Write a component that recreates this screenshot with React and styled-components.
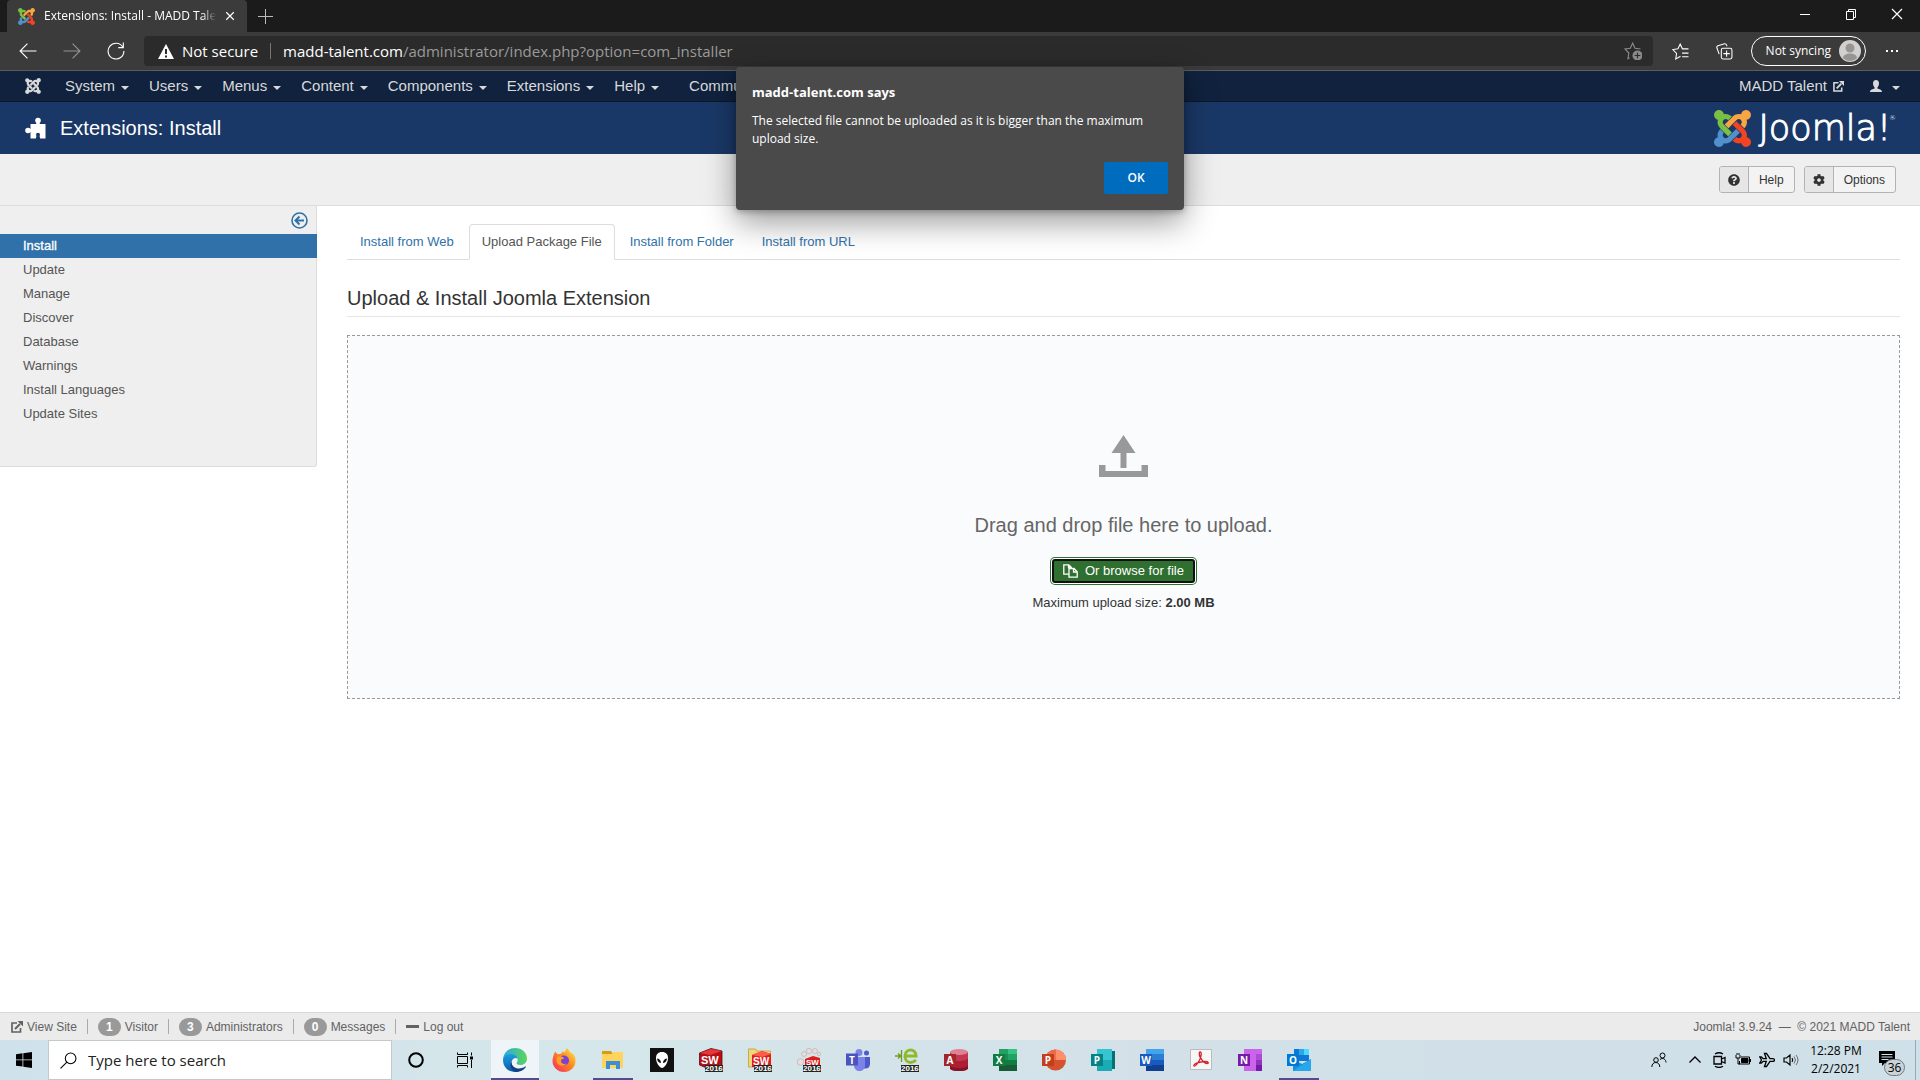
import React, { useState } from "react";
import styled, { createGlobalStyle, css } from "styled-components";
import {
  FaJoomla,
  FaQuestionCircle,
  FaCog,
} from "react-icons/fa";

const ui = `"Open Sans", "Noto Sans", sans-serif`;
const arial = `"Liberation Sans", Arial, sans-serif`;

const colors = {
  link: "#3071a9",
  navbar: "#10223e",
  header: "#1a3867",
  light: "#efefef",
  border: "#dddddd",
  taskAccent: "#564a8f",
};

const GlobalStyle = createGlobalStyle`
  *, *::before, *::after {
    box-sizing: border-box;
  }
  body {
    margin: 0;
    background: #fff;
    color: #333;
    font: 13px/18px ${arial};
  }
  button, input {
    font: inherit;
    color: inherit;
    margin: 0;
    padding: 0;
    border: 0;
    background: none;
  }
  a {
    color: inherit;
    text-decoration: none;
  }
  svg {
    display: block;
    flex: none;
  }
`;

const Screen = styled.div`
  position: relative;
  display: flex;
  flex-direction: column;
  min-height: 100vh;
`;

/* ---------- browser chrome ---------- */

const TitleBar = styled.header`
  display: flex;
  height: 32px;
  padding-left: 7px;
  background: #1b1b1b;
  color: #fff;
`;

const BrowserTab = styled.div`
  display: flex;
  align-items: center;
  gap: 9px;
  width: 240px;
  padding: 0 12px 0 11px;
  border-radius: 4px 4px 0 0;
  background: #3b3b3b;
  font: 12px/16px ${ui};
`;

const TabTitle = styled.span`
  flex: 1;
  overflow: hidden;
  white-space: nowrap;
  mask-image: linear-gradient(to right, #000 92%, transparent);
`;

const PlainButton = styled.button`
  display: flex;
  align-items: center;
  justify-content: center;
  width: ${(p) => p.$width || 44}px;
  opacity: ${(p) => (p.$dim ? 0.45 : 1)};
`;

const WindowControls = styled.div`
  display: flex;
  height: 28px;
  margin-left: auto;
`;

const Toolbar = styled.div`
  display: flex;
  align-items: stretch;
  height: 39px;
  padding: 4px 6px;
  border-bottom: 1px solid #5c5c5c;
  background: #3b3b3b;
  color: #fff;
`;

const AddressBar = styled.div`
  display: flex;
  flex: 1;
  align-items: center;
  margin: 0 6px;
  padding: 0 11px 0 14px;
  border-radius: 4px;
  background: #2b2b2b;
  font: 15px/20px ${ui};
`;

const Security = styled.span`
  display: flex;
  align-items: center;
  gap: 8px;
  height: 16px;
  margin-right: 12px;
  padding-right: 12px;
  border-right: 1px solid #777;
`;

const UrlInput = styled.input`
  flex: 1;
  color: #9a9a9a;
  outline: 0;
`;

const ProfilePill = styled.button`
  display: flex;
  align-items: center;
  gap: 8px;
  margin: 0 4px;
  padding: 0 4px 0 14px;
  border: 1px solid #fff;
  border-radius: 15px;
  font: 12px/16px ${ui};
`;

const Dialog = styled.div`
  position: absolute;
  top: 67px;
  left: 50%;
  width: 448px;
  margin-left: -224px;
  padding: 16px;
  border-radius: 4px;
  background: #4a4a4a;
  color: #fff;
  font: 12px/18px ${ui};
  box-shadow: 0 12px 32px rgba(0, 0, 0, 0.4), 0 2px 6px rgba(0, 0, 0, 0.25);
`;

const DialogTitle = styled.h2`
  margin: 0 0 11px;
  font-size: 13px;
  line-height: 18px;
`;

const DialogText = styled.p`
  margin: 0 0 14px;
`;

const OkButton = styled.button`
  display: block;
  width: 64px;
  height: 32px;
  margin-left: auto;
  border-radius: 2px;
  background: #006cbe;
  font-weight: 600;
`;

/* ---------- Joomla administrator ---------- */

const Navbar = styled.nav`
  display: flex;
  align-items: center;
  height: 31px;
  padding: 0 10px 0 24px;
  border-bottom: 1px solid #0b172b;
  background: ${colors.navbar};
  color: #d9d9d9;
  font-size: 15px;
`;

const MenuLink = styled.a`
  display: flex;
  align-items: center;
  gap: ${(p) => p.$gap || 6}px;
  padding: 0 10px;
`;

const MenuGroup = styled.div`
  display: flex;
  margin-left: ${(p) => (p.$end ? "auto" : p.$gap + "px")};
`;

const Caret = styled.span`
  margin-top: 3px;
  border: 4px solid transparent;
  border-top-color: currentColor;
  border-bottom: 0;
`;

const PageHeader = styled.div`
  display: flex;
  align-items: center;
  justify-content: space-between;
  height: 52px;
  padding: 0 24px;
  background: ${colors.header};
  color: #fff;
`;

const PageTitle = styled.h1`
  display: flex;
  align-items: center;
  gap: 14px;
  margin: 0;
  font-size: 20px;
  font-weight: normal;
  line-height: 26px;
`;

const Brand = styled.a`
  display: flex;
  align-items: center;
  gap: 8px;
  font: 200 35px/36px "DejaVu Sans", sans-serif;
  -webkit-text-stroke: 1px #fff;
`;

const Registered = styled.sup`
  align-self: flex-start;
  margin-left: -10px;
  font-size: 7px;
  line-height: 16px;
  -webkit-text-stroke: 0;
`;

const Subhead = styled.div`
  display: flex;
  align-items: center;
  justify-content: flex-end;
  gap: 9px;
  height: 52px;
  padding: 0 24px;
  border-bottom: 1px solid ${colors.border};
  background: ${colors.light};
`;

const ToolButton = styled.button`
  display: flex;
  align-items: center;
  height: 27px;
  overflow: hidden;
  padding-right: 10px;
  border: 1px solid #b3b3b3;
  border-radius: 3px;
  background: #f3f3f3;
  font-size: 12px;
`;

const ToolIcon = styled.span`
  display: flex;
  align-items: center;
  justify-content: center;
  align-self: stretch;
  width: 29px;
  margin-right: 10px;
  border-right: 1px solid #b3b3b3;
  background: #e6e6e6;
`;

const Body = styled.div`
  display: flex;
  flex: 1;
  align-items: flex-start;
`;

const Sidebar = styled.aside`
  width: 317px;
  padding-bottom: 40px;
  border: solid ${colors.border};
  border-width: 0 1px 1px 0;
  border-radius: 0 0 3px 0;
  background: ${colors.light};
`;

const SidebarToggle = styled.button`
  display: block;
  height: 28px;
  margin-left: auto;
  padding-right: 8px;
  color: ${colors.link};
`;

const SideLink = styled.a`
  display: block;
  padding: 3px 23px;
  color: #555;
  ${(p) =>
    p.$active &&
    css`
      margin-right: -1px;
      background: ${colors.link};
      color: #fff;
      -webkit-text-stroke: 0.3px #fff;
    `}
`;

const Main = styled.main`
  flex: 1;
  padding: 18px 20px 20px 30px;
`;

const Tabs = styled.div`
  display: flex;
  gap: 2px;
  border-bottom: 1px solid ${colors.border};
`;

const TabLink = styled.a`
  margin-bottom: -1px;
  padding: 8px 12px;
  border: 1px solid transparent;
  border-radius: 4px 4px 0 0;
  color: ${colors.link};
  ${(p) =>
    p.$active &&
    css`
      border-color: ${colors.border};
      border-bottom-color: #fff;
      background: #fff;
      color: #555;
    `}
`;

const Legend = styled.h2`
  margin: 20px 0 18px;
  border-bottom: 1px solid #e5e5e5;
  font-size: 20px;
  font-weight: normal;
  line-height: 36px;
`;

const DropZone = styled.section`
  display: flex;
  flex-direction: column;
  align-items: center;
  padding: 99px 0 86px;
  border: 1px dashed #999;
  background: #fafbfd;
`;

const Lead = styled.p`
  margin: 30px 0 14px;
  color: #666;
  font-size: 20px;
  line-height: 36px;
`;

const BrowseButton = styled.button`
  display: flex;
  align-items: center;
  gap: 7px;
  height: 24px;
  margin: 2px 0 11px;
  padding: 0 9px;
  border: 2px solid #111;
  border-radius: 3px;
  background: #2f6f2f;
  box-shadow: 0 0 0 1px #fff, 0 0 0 2px #2f6f2f;
  color: #fff;
`;

const SizeNote = styled.p`
  margin: 0;
`;

const StatusBar = styled.footer`
  display: flex;
  align-items: center;
  height: 28px;
  padding: 0 10px 0 11px;
  border-top: 1px solid #d9d9d9;
  background: #ebebeb;
  color: #626262;
  font-size: 12px;
`;

const StatusLink = styled.a`
  display: flex;
  align-items: center;
  gap: 4px;
  height: 15px;
  margin-right: 10px;
  padding-right: 10px;
  border-right: 1px solid #aaa;
  &:last-of-type {
    border: 0;
  }
`;

const Count = styled.span`
  width: 23px;
  border-radius: 9px;
  background: #999;
  color: #fff;
  font-weight: bold;
  text-align: center;
`;

const Copyright = styled.span`
  margin-left: auto;
  white-space: pre;
`;

/* ---------- Windows taskbar ---------- */

const Taskbar = styled.div`
  display: flex;
  height: 40px;
  background: linear-gradient(90deg, #cfe1ea, #d5e7ea 30%, #d3e0e8 60%, #cfe0e8);
  color: #000;
`;

const SearchBox = styled.label`
  display: flex;
  align-items: center;
  gap: 11px;
  width: 344px;
  padding: 0 11px;
  border: 1px solid #c4c9cc;
  background: #fff;
  font: 15px/20px ${ui};
`;

const SearchInput = styled.input`
  flex: 1;
  outline: 0;
  &::placeholder {
    color: #222;
    opacity: 1;
  }
`;

const TaskButton = styled.button`
  display: flex;
  align-items: center;
  justify-content: center;
  width: 48px;
  margin-right: 1px;
  background: ${(p) => (p.$active ? "#eef4f8" : "none")};
  box-shadow: ${(p) => (p.$active ? `inset 0 -2px ${colors.taskAccent}` : "none")};
  ${(p) =>
    p.$running &&
    css`
      background: linear-gradient(${colors.taskAccent}, ${colors.taskAccent})
        center bottom / 40px 2px no-repeat;
    `}
`;

const Tray = styled.div`
  display: flex;
  align-items: center;
  margin-left: auto;
  padding-right: 4px;
`;

const Clock = styled.time`
  width: 66px;
  font: 12px/18px ${ui};
  text-align: center;
`;

const NoticeButton = styled.button`
  position: relative;
  width: 47px;
  height: 40px;
  padding: 0 0 4px 10px;
  border-right: 1px solid #98a9b3;
`;

const NoticeCount = styled.span`
  position: absolute;
  right: 10px;
  bottom: 4px;
  width: 21px;
  border: 1px solid #777;
  border-radius: 9px;
  background: #c9d3d8;
  font: 12px/15px ${ui};
`;

/* ---------- icons ---------- */

const Stroke = ({ size = 16, width = 1, children }) => (
  <svg
    width={size}
    height={size}
    viewBox="0 0 16 16"
    fill="none"
    stroke="currentColor"
    strokeWidth={width}
  >
    {children}
  </svg>
);

const JoomlaMark = ({ width, height }) => (
  <svg width={width} height={height} viewBox="0 32 448 448">
    <path
      fill="#7ac143"
      d="M.6 92.1C.6 58.8 27.4 32 60.4 32c30 0 54.5 21.9 59.2 50.2 32.6-7.6 67.1.6 96.5 30l-44.3 44.3c-20.5-20.5-42.6-16.3-55.4-3.5-14.3 14.3-14.3 37.9 0 52.2l99.5 99.5-44 44.3c-87.7-87.2-49.7-49.7-99.8-99.7-26.8-26.5-35-64.8-24.8-98.9C20.4 144.6.6 120.7.6 92.1z"
    />
    <path
      fill="#f9a541"
      d="M130.1 208.5l44.3 44.3c10-10 89.7-89.7 99.7-99.8 14.3-14.3 37.6-14.3 51.9 0 12.8 12.8 17 35-3.5 55.4l44 44.3c31.2-31.2 38.5-67.6 28.9-101.2 29.2-4.1 51.9-29.2 51.9-59.5 0-33.2-26.8-60.1-59.8-60.1-30.3 0-55.4 22.5-59.5 51.6-33.8-9.9-71.7-1.5-98.3 25.1-18.3 19.1-71.1 71.5-99.6 99.9z"
    />
    <path
      fill="#f44321"
      d="M396.4 360.7c8.2-32.7-.9-68.5-26.3-93.9-11.8-12.2 5 4.7-99.5-99.7l-44.3 44.3 99.7 99.7c14.3 14.3 14.3 37.6 0 51.9-12.8 12.8-35 17-55.4-3.5l-44 44.3c27.6 30.2 68 38.8 102.7 28 5.5 27.4 29.7 48.1 58.9 48.1 33 0 59.8-26.8 59.8-60.1 0-30.2-22.5-55-51.6-59.1z"
    />
    <path
      fill="#5091cd"
      d="M312.1 307.6l-44-44.3c-87 86.4-50.4 50.4-99.7 99.8-14.3 14.3-37.6 14.3-51.9 0-13.1-13.4-16.9-35.3 3.2-55.4l-44-44.3c-30.2 30.2-38 65.2-29.5 98.3-26.7 6-46.2 29.9-46.2 58.2C0 453.2 26.8 480 59.8 480c28.6 0 52.5-19.8 58.6-46.7 32.7 8.2 68.5-.6 94.2-26 32.1-32 12.2-12.4 99.5-99.7z"
    />
  </svg>
);

const PuzzleIcon = () => (
  <svg width="22" height="22" viewBox="0 0 22 22" fill="#fff">
    <circle cx="14" cy="3.500" r="2.800" />
    <circle cx="4" cy="13.500" r="2.800" />
    <path d="M12.800 5h2.400l.8 2h5.500v14.500H16l-.9-2.500h-2.200l-.9 2.500H6.500V15L4 14.600v-2.200l2.500-.4V7H12z" />
    <circle cx="14" cy="17.800" r="2" fill={colors.header} />
    <path d="M13 18h2l1.200 4h-4.400z" fill={colors.header} />
  </svg>
);

const ExternalIcon = ({ size = 11 }) => (
  <svg width={size} height={size} viewBox="0 0 12 12" fill="none" stroke="currentColor">
    <path d="M6 2H1v9h8.500V7" strokeWidth="1.700" />
    <path d="M4 8l5-5" strokeWidth="2" />
    <path d="M6.500 0H12v5.500z" fill="currentColor" stroke="none" />
  </svg>
);

const UserIcon = () => (
  <svg width="12" height="12" viewBox="0 0 12 12" fill="currentColor">
    <path d="M6 0c2 0 3 1.300 3 3.200S8 7 7.400 7.500v1C9 9 12 9.500 12 12H0c0-2.500 3-3 4.600-3.500v-1C4 7 3 5.100 3 3.200S4 0 6 0z" />
  </svg>
);

const ToggleIcon = () => (
  <svg width="17" height="17" viewBox="0 0 17 17" fill="none" stroke="currentColor">
    <circle cx="8.500" cy="8.500" r="7.500" strokeWidth="1.600" />
    <path d="M13 8.500H5M8.500 4.500l-4 4 4 4" strokeWidth="2" />
  </svg>
);

const UploadIcon = () => (
  <svg width="49" height="42" viewBox="0 0 49 42" fill="#999">
    <path d="M24.500 0L36.500 18H27.500V33H21.500V18H12.500z" />
    <path d="M0 30h6.500v6h36v-6H49v12H0z" />
  </svg>
);

const CopyIcon = () => (
  <svg width="15" height="14" viewBox="0 0 15 14" fill="none" stroke="#fff">
    <path d="M6 10.200H.8V.8h5l2.500 2.500v1M5.500 1v2.700h2.500" strokeWidth="1.300" />
    <path d="M6 4.500h5l3.200 3.200v5.500H6zM10.500 4.500v3.500H14" strokeWidth="1.300" />
  </svg>
);

const EdgeIcon = () => (
  <svg width="24" height="24" viewBox="0 0 24 24">
    <defs>
      <linearGradient id="edgeTop" x1="0" x2="1">
        <stop offset="0" stopColor="#2aa9e0" />
        <stop offset="1" stopColor="#5bd65a" />
      </linearGradient>
      <linearGradient id="edgeSide" x1="0" y1="0" x2="0" y2="1">
        <stop offset="0" stopColor="#1b9de2" />
        <stop offset="1" stopColor="#0c59a4" />
      </linearGradient>
    </defs>
    <path
      fill="url(#edgeTop)"
      d="M0 11C.8 4.500 5.800 0 12 0c7 0 12 4.800 12 10.500 0 4-3 6.500-6.500 6.500-2.600 0-4-.9-4-1.700 0-.7 1.200-1.200 1.200-3.200C14.700 9 11.500 6.500 8 6.500 4 6.500 1 8.500 0 11z"
    />
    <path
      fill="url(#edgeSide)"
      d="M0 12c0-3.500 3.500-6 7.500-6 3.700 0 6.500 1.800 7 4.500-2.300-1.500-6 .3-6 4.500 0 5 5 8.400 7.500 8.200-1 .5-2.500.8-4 .8C5 24 0 18.600 0 12z"
    />
    <path
      fill="#123f86"
      d="M8.500 14c0 4 3.500 6.500 7.500 6.500 3 0 5-1.200 6.200-2 .5-.3 1 .2.6.8C20.500 22.500 17 24 13.500 23.900 8 23 6 17 8.500 14z"
    />
  </svg>
);

const FirefoxIcon = () => (
  <svg width="24" height="24" viewBox="0 0 24 24">
    <defs>
      <linearGradient id="fox" x1="1" y1="0" x2="0" y2="1">
        <stop offset="0" stopColor="#fff04a" />
        <stop offset=".45" stopColor="#ff8a1c" />
        <stop offset="1" stopColor="#f5226c" />
      </linearGradient>
    </defs>
    <path
      fill="url(#fox)"
      d="M3 3.500l2.500 2.700 3.500-.5L11 3l1 2 3-5 3 4 3.500 2.500c1.500 2 2 4 2 6.500 0 6-5 11-11.500 11S.5 19 .5 13C.5 9 2 6.500 3 3.500z"
    />
    <circle cx="12" cy="12.500" r="5" fill="#7a3fd4" />
    <path fill="#ff9f20" d="M5 9c2.500-1.500 5-1 7.500 1.500-2 .3-3.500 1-3.500 2.500 0 2.500 3 3.500 5.500 2.500-1.500 3-8 3-9.500-1-.5-1.500-.6-3.500 0-5.500z" />
  </svg>
);

const ExplorerIcon = () => (
  <svg width="22" height="20" viewBox="0 0 22 20">
    <path fill="#dc9a12" d="M0 1h9l2 3H0z" />
    <path fill="#ffd45e" d="M0 4h10l2-2h9v16H0z" />
    <path fill="#3b8fd2" d="M4 11h14v8h-4v-4H8v4H4z" />
  </svg>
);

const AlienIcon = () => (
  <svg width="24" height="24" viewBox="0 0 24 24">
    <path fill="#111" d="M0 0h24v24H0z" />
    <path fill="#fff" d="M12 4c4 0 6 2.500 6 6 0 4.500-3.500 10-6 10s-6-5.500-6-10c0-3.500 2-6 6-6z" />
    <path fill="#111" d="M7 10.500c2 0 4 1.500 4 4.500-2 0-4-2-4-4.500zM17 10.500c-2 0-4 1.500-4 4.500 2 0 4-2 4-4.500z" />
  </svg>
);

const YearLabel = () => (
  <>
    <path fill="#222" d="M6 17h18v7H6z" />
    <text x="6" y="23" fontFamily={arial} fontSize="8" fontWeight="bold" fill="#fff">
      2016
    </text>
  </>
);

const SolidWorksIcon = ({ kind }) => (
  <svg width="24" height="24" viewBox="0 0 24 24">
    {kind === "folder" && (
      <path fill="#f2d67a" stroke="#c9a94a" d="M.5 1h7l1 2h14v16H.5z" />
    )}
    {kind === "parts" && (
      <g fill="#e6dede" stroke="#b9a9a9" strokeWidth=".6">
        <circle cx="3.500" cy="14" r="3.300" />
        <circle cx="7" cy="6" r="2.500" />
        <circle cx="12" cy="3" r="2.700" />
        <circle cx="18" cy="3" r="2.500" />
        <circle cx="22" cy="6" r="1.700" />
      </g>
    )}
    {kind === "cube" && (
      <>
        <path fill="#b80f16" stroke="#5c0a0d" strokeWidth=".8" d="M.5 5l11.500-4.500L23 3v14l-13 4-9.500-4z" />
        <path fill="#e5383c" d="M1 5l11-4 11 2-12 4z" />
        <text x="2" y="16" fontFamily={arial} fontSize="11" fontWeight="bold" fill="#fff">
          SW
        </text>
      </>
    )}
    {kind === "folder" && (
      <>
        <path fill="#e11c1c" d="M4 7l10-4 9 3v13H4z" />
        <path fill="#ff5a4a" d="M4 7l10-4 9 3-9 3z" />
        <text x="5" y="17" fontFamily={arial} fontSize="10" fontWeight="bold" fill="#fff">
          SW
        </text>
      </>
    )}
    {kind === "parts" && (
      <>
        <path fill="#e11c1c" d="M8 11l8-3 7 2v9H8z" />
        <text x="9" y="17" fontFamily={arial} fontSize="8" fontWeight="bold" fill="#fff">
          SW
        </text>
      </>
    )}
    <YearLabel />
  </svg>
);

const DrawingsIcon = () => (
  <svg width="24" height="24" viewBox="0 0 24 24">
    <path d="M0 8h5M3 5.500L6 8l-3 2.500M6.500 2v12" stroke="#6f9a20" fill="none" strokeWidth="1.300" />
    <path
      d="M10 8h11c0-4-2.500-6-5.500-6-3.500 0-5.500 3-5.500 6.500s2.500 6 5.500 6c2.500 0 4-1 5.500-2.500"
      stroke="#8dbb2a"
      fill="none"
      strokeWidth="3"
    />
    <YearLabel />
  </svg>
);

const TeamsIcon = () => (
  <svg width="24" height="24" viewBox="0 0 24 24">
    <circle cx="13" cy="4.500" r="3.500" fill="#7b83eb" />
    <circle cx="20.500" cy="5" r="2.500" fill="#5059c9" />
    <path fill="#5059c9" d="M17 9h7v7c0 3-2 4.500-4.500 4.500H17z" />
    <path fill="#7b83eb" d="M8 9h11v8c0 4-2.500 6-5.500 6S8 21 8 17z" />
    <path fill="#4b53bc" d="M0 5.500h12v12H0z" />
    <text x="6" y="15.500" textAnchor="middle" fontFamily={ui} fontSize="10" fontWeight="bold" fill="#fff">
      T
    </text>
  </svg>
);

const officeShades = {
  A: ["#d35469", "#c2384f", "#ae1d34", "#821423", "#a4262c"],
  X: ["#33c481", "#21a366", "#107c41", "#185c37", "#107c41"],
  P: ["#ff8f6b", "#ed6c47", "#d35230", "#c43e1c", "#c43e1c"],
  B: ["#36c5d0", "#1aabb5", "#0d8387", "#067074", "#038387"],
  W: ["#41a5ee", "#2b7cd3", "#185abd", "#103f91", "#185abd"],
  N: ["#ca64ea", "#ae4bd5", "#9332bf", "#7719aa", "#7719aa"],
  O: ["#28a8ea", "#50d9ff", "#1490df", "#0f78d4", "#0078d4"],
};

const OfficeIcon = ({ kind }) => {
  const [a, b, c, d, tile] = officeShades[kind];
  return (
    <svg width="24" height="24" viewBox="0 0 24 24">
      {kind === "P" && (
        <>
          <circle cx="13.500" cy="12" r="10.500" fill={c} />
          <path fill={a} d="M13.500 1.500A10.500 10.500 0 0 1 24 12H13.500z" />
          <path fill={b} d="M13.500 1.500V12H3A10.500 10.500 0 0 1 13.500 1.500z" />
        </>
      )}
      {kind === "A" && (
        <>
          <path fill={b} d="M6 4h18v16c0 2-4 3-9 3s-9-1-9-3z" />
          <path fill={c} d="M6 10c0 2 4 3 9 3s9-1 9-3v10c0 2-4 3-9 3s-9-1-9-3z" />
          <path fill={d} d="M6 17c0 2 4 3 9 3s9-1 9-3v3c0 2-4 3-9 3s-9-1-9-3z" />
          <ellipse cx="15" cy="4" rx="9" ry="3" fill="#e08095" />
        </>
      )}
      {(kind === "X" || kind === "W") && (
        <>
          <path fill={a} d="M6 1h18v6H6z" />
          <path fill={b} d="M6 6h18v6H6z" />
          <path fill={c} d="M6 12h18v5H6z" />
          <path fill={d} d="M6 17h18v6H6z" />
          {kind === "X" && <path fill={c} d="M6 1h9v11H6z" opacity=".5" />}
        </>
      )}
      {kind === "B" && (
        <>
          <path fill={d} d="M16 3h8v18h-8z" />
          <path fill={a} d="M6 1h15v11H6z" />
          <path fill={b} d="M6 12h15v11H6z" />
        </>
      )}
      {kind === "N" && (
        <>
          <path fill={a} d="M6 1h18v22H6z" />
          <path fill={b} d="M18 6h6v6h-6z" />
          <path fill={c} d="M18 12h6v5h-6z" />
          <path fill={d} d="M18 17h6v6h-6z" />
        </>
      )}
      {kind === "O" && (
        <>
          <path fill={d} d="M7 1h15v12H7z" />
          <path fill={a} d="M12 1h5v6h-5z" />
          <path fill={b} d="M17 1h5v6h-5z" />
          <path fill={d} d="M12 7h10v6H12z" />
          <path fill={c} d="M6 11l9 5 9-5v12H6z" />
          <path fill={a} d="M6 23l18-12v12z" />
        </>
      )}
      <path fill={tile} d="M0 6h12v12H0z" />
      <text x="6" y="16" textAnchor="middle" fontFamily={ui} fontSize="10" fontWeight="bold" fill="#fff">
        {kind === "B" ? "P" : kind}
      </text>
    </svg>
  );
};

const AcrobatIcon = () => (
  <svg width="22" height="22" viewBox="0 0 22 22">
    <path fill="#f7f7f7" stroke="#bbb" d="M.5.500h21v20H.5z" />
    <path
      fill="none"
      stroke="#d3222a"
      strokeWidth="1.300"
      d="M10 3c2 0 1.500 5-1 9-2 3.500-4 5.500-5 5-1.500-1.500 5-4.500 11-4.500 4 0 4 2 2 2C14 14.500 9 8 9.300 4.500 9.300 3.500 9.600 3 10 3z"
    />
  </svg>
);

const taskItems = [
  { name: "Microsoft Edge", icon: <EdgeIcon />, active: true },
  { name: "Firefox", icon: <FirefoxIcon /> },
  { name: "File Explorer", icon: <ExplorerIcon />, running: true },
  { name: "Alienware", icon: <AlienIcon /> },
  { name: "SolidWorks", icon: <SolidWorksIcon kind="cube" /> },
  { name: "SolidWorks Explorer", icon: <SolidWorksIcon kind="folder" /> },
  { name: "SolidWorks Composer", icon: <SolidWorksIcon kind="parts" /> },
  { name: "Teams", icon: <TeamsIcon /> },
  { name: "eDrawings", icon: <DrawingsIcon /> },
  { name: "Access", icon: <OfficeIcon kind="A" /> },
  { name: "Excel", icon: <OfficeIcon kind="X" /> },
  { name: "PowerPoint", icon: <OfficeIcon kind="P" /> },
  { name: "Publisher", icon: <OfficeIcon kind="B" /> },
  { name: "Word", icon: <OfficeIcon kind="W" /> },
  { name: "Acrobat", icon: <AcrobatIcon /> },
  { name: "OneNote", icon: <OfficeIcon kind="N" /> },
  { name: "Outlook", icon: <OfficeIcon kind="O" />, running: true },
];

const trayItems = [
  {
    name: "Hidden icons",
    icon: <path d="M2.500 10.500L8 5l5.500 5.500" strokeWidth="1.300" />,
  },
  {
    name: "Meet Now",
    icon: (
      <path
        d="M3 4.500h7.500v7.500H3zM10.500 7L14 5.500V11l-3.500-1.500M4 2Q8-.5 12 2M4 14.200q4 2.500 8 0"
        strokeWidth="1.300"
      />
    ),
  },
  {
    name: "Battery",
    icon: (
      <>
        <path d="M6 5h8.500v7H4.500V9M1 3v3h4V3M3 6v6h2M2 1v2M4 1v2M15.500 7v3" />
        <path d="M6.500 6.500H13v4H6.500z" fill="currentColor" />
      </>
    ),
  },
  {
    name: "Airplane mode",
    icon: (
      <path
        d="M.8 5l1.700 3-1.700 3h1.500l2-1.700h3L5.500 14.500h2L11 9.300h3c2 0 2-2.600 0-2.600h-3L7.500 1.500h-2l1.800 5.200h-3L2.300 5z"
        strokeWidth="1.300"
      />
    ),
  },
  {
    name: "Volume",
    icon: (
      <>
        <path d="M1 6v4h2.500L7 13V3L3.500 6zM9 6q1.500 2 0 4" strokeWidth="1.200" />
        <path d="M11 4.500q3 3.500 0 7M13 3q4 5 0 10" opacity=".5" />
      </>
    ),
  },
];

const mainMenu = [
  "System",
  "Users",
  "Menus",
  "Content",
  "Components",
  "Extensions",
  "Help",
];

const sideLinks = [
  "Install",
  "Update",
  "Manage",
  "Discover",
  "Database",
  "Warnings",
  "Install Languages",
  "Update Sites",
];

const installTabs = [
  "Install from Web",
  "Upload Package File",
  "Install from Folder",
  "Install from URL",
];

const Browser = () => {
  const [path, setPath] = useState(
    "/administrator/index.php?option=com_installer"
  );
  return (
    <>
      <TitleBar>
        <BrowserTab>
          <JoomlaMark width={17} height={17} />
          <TabTitle>Extensions: Install - MADD Talent</TabTitle>
          <PlainButton $width={10} aria-label="Close tab">
            <Stroke size={10} width={2}>
              <path d="M2 2l12 12M14 2L2 14" />
            </Stroke>
          </PlainButton>
        </BrowserTab>
        <PlainButton $width={36} aria-label="New tab">
          <Stroke size={16}>
            <path d="M8.500 1v15M1 8.500h15" stroke="#bbb" />
          </Stroke>
        </PlainButton>
        <WindowControls>
          <PlainButton $width={46} aria-label="Minimize">
            <Stroke size={16}>
              <path d="M3 8.500h10" />
            </Stroke>
          </PlainButton>
          <PlainButton $width={46} aria-label="Restore">
            <Stroke size={16}>
              <path d="M3.500 5.500h7v8h-7zM5.500 5V3.500h7v8h-2" />
            </Stroke>
          </PlainButton>
          <PlainButton $width={46} aria-label="Close">
            <Stroke size={16}>
              <path d="M3 3l10 10M13 3L3 13" strokeWidth="1.200" />
            </Stroke>
          </PlainButton>
        </WindowControls>
      </TitleBar>
      <Toolbar>
        <PlainButton aria-label="Back">
          <Stroke size={18}>
            <path d="M15.500 8H1M7.500 1.500L1 8l6.500 6.500" />
          </Stroke>
        </PlainButton>
        <PlainButton $dim aria-label="Forward">
          <Stroke size={18}>
            <path d="M.5 8H15M8.500 1.500L15 8l-6.500 6.500" />
          </Stroke>
        </PlainButton>
        <PlainButton aria-label="Refresh">
          <Stroke size={18}>
            <path d="M14 4.500A7 7 0 1 0 15 8M14.500.500v4.500H10" />
          </Stroke>
        </PlainButton>
        <AddressBar>
          <Security>
            <svg width="16" height="15" viewBox="0 0 16 15">
              <path fill="#fff" d="M8 0l8 15H0z" />
              <path fill="#2b2b2b" d="M7 5h2v5H7zM7 11.500h2v2H7z" />
            </svg>
            Not secure
          </Security>
          <label htmlFor="url">madd-talent.com</label>
          <UrlInput
            id="url"
            value={path}
            onChange={(evt) => setPath(evt.target.value)}
          />
          <PlainButton $width={18} $dim aria-label="Add to favorites">
            <Stroke size={18}>
              <path d="M5 14l-1.500.8.8-5L.8 6.200l4.800-.7L7.700 1l2.100 4.500 4.800.7" />
              <circle cx="12" cy="12" r="4" fill="currentColor" />
              <path d="M12 9.500v5M9.500 12h5" stroke="#2b2b2b" />
            </Stroke>
          </PlainButton>
        </AddressBar>
        <PlainButton aria-label="Favorites">
          <Stroke size={17}>
            <path d="M8 12.500L3.500 15l.8-5.200L.8 6.200l4.800-.7L7.700 1l2.100 4.500H15.500M9.500 9.500h6M9.500 13h6" />
          </Stroke>
        </PlainButton>
        <PlainButton aria-label="Collections">
          <Stroke size={17}>
            <path d="M3 10.500L.8 4.500q-.3-1.500 1-2L8 .7q1.500-.2 2 1.300l.4 1" />
            <rect x="5" y="5" width="10" height="10" rx="1.500" />
            <path d="M10 7v6M7 10h6" />
          </Stroke>
        </PlainButton>
        <ProfilePill>
          Not syncing
          <svg width="22" height="22" viewBox="0 0 22 22">
            <circle cx="11" cy="11" r="11" fill="#d2d0ce" />
            <circle cx="11" cy="8" r="4.500" fill="#979593" />
            <path fill="#979593" d="M4 18c0-6 14-6 14 0-4 4-10 4-14 0z" />
          </svg>
        </ProfilePill>
        <PlainButton aria-label="Settings and more">
          <Stroke size={16}>
            <path d="M2 8h2M7 8h2M12 8h2" strokeWidth="2" />
          </Stroke>
        </PlainButton>
      </Toolbar>
    </>
  );
};

const Administrator = () => (
  <>
    <Navbar>
      <FaJoomla size={18} />
      <MenuGroup $gap={13}>
        {mainMenu.map((name) => (
          <MenuLink href="#" key={name}>
            {name}
            <Caret />
          </MenuLink>
        ))}
      </MenuGroup>
      <MenuGroup $gap={10}>
        <MenuLink href="#">
          Community Builder
          <Caret />
        </MenuLink>
      </MenuGroup>
      <MenuGroup $end>
        <MenuLink href="#">
          MADD Talent
          <ExternalIcon />
        </MenuLink>
        <MenuGroup $gap={6}>
          <MenuLink href="#" $gap={10} aria-label="User menu">
            <UserIcon />
            <Caret />
          </MenuLink>
        </MenuGroup>
      </MenuGroup>
    </Navbar>
    <PageHeader>
      <PageTitle>
        <PuzzleIcon />
        Extensions: Install
      </PageTitle>
      <Brand href="#">
        <JoomlaMark width={37} height={37} />
        Joomla!
        <Registered>®</Registered>
      </Brand>
    </PageHeader>
    <Subhead>
      <ToolButton>
        <ToolIcon>
          <FaQuestionCircle size={12} />
        </ToolIcon>
        Help
      </ToolButton>
      <ToolButton>
        <ToolIcon>
          <FaCog size={12} />
        </ToolIcon>
        Options
      </ToolButton>
    </Subhead>
    <Body>
      <Sidebar>
        <SidebarToggle aria-label="Toggle sidebar">
          <ToggleIcon />
        </SidebarToggle>
        {sideLinks.map((name) => (
          <SideLink href="#" key={name} $active={name === "Install"}>
            {name}
          </SideLink>
        ))}
      </Sidebar>
      <Main>
        <Tabs>
          {installTabs.map((name) => (
            <TabLink
              href="#"
              key={name}
              $active={name === "Upload Package File"}
            >
              {name}
            </TabLink>
          ))}
        </Tabs>
        <Legend>Upload &amp; Install Joomla Extension</Legend>
        <DropZone>
          <UploadIcon />
          <Lead>Drag and drop file here to upload.</Lead>
          <BrowseButton>
            <CopyIcon />
            Or browse for file
          </BrowseButton>
          <SizeNote>
            Maximum upload size: <strong>2.00 MB</strong>
          </SizeNote>
        </DropZone>
      </Main>
    </Body>
    <StatusBar>
      <StatusLink href="#">
        <ExternalIcon size={12} />
        View Site
      </StatusLink>
      <StatusLink href="#">
        <Count>1</Count>
        Visitor
      </StatusLink>
      <StatusLink href="#">
        <Count>3</Count>
        Administrators
      </StatusLink>
      <StatusLink href="#">
        <Count>0</Count>
        Messages
      </StatusLink>
      <StatusLink href="#">
        <svg width="13" height="3" viewBox="0 0 13 3">
          <path d="M0 0h13v3H0z" fill="currentColor" />
        </svg>
        Log out
      </StatusLink>
      <Copyright>Joomla! 3.9.24&nbsp; — &nbsp;© 2021 MADD Talent</Copyright>
    </StatusBar>
  </>
);

const WindowsTaskbar = () => (
  <Taskbar>
    <PlainButton $width={48} aria-label="Start">
      <svg width="16" height="16" viewBox="0 0 16 16">
        <path d="M0 2.200L6.500 1.300v6.200H0zM7.300 1.200L16 0v7.500H7.300zM0 8.300h6.500v6.300L0 13.700zM7.300 8.300H16V16l-8.700-1.200z" />
      </svg>
    </PlainButton>
    <SearchBox>
      <Stroke size={17}>
        <circle cx="10" cy="6" r="5" />
        <path d="M6.500 9.500L.5 15.500" />
      </Stroke>
      <SearchInput placeholder="Type here to search" />
    </SearchBox>
    <TaskButton aria-label="Cortana">
      <Stroke size={16} width={2}>
        <circle cx="8" cy="8" r="6.800" />
      </Stroke>
    </TaskButton>
    <TaskButton aria-label="Task view">
      <Stroke size={16}>
        <path d="M.5 4.500h10v7H.5zM.5.500v2h10v-2M.5 15.500v-2h10v2M14.500.500v3M14.500 8v8" />
        <path d="M13 4.500h3v3h-3z" fill="currentColor" stroke="none" />
      </Stroke>
    </TaskButton>
    <PlainButton as="span" $width={1} />
    {taskItems.map((item) => (
      <TaskButton
        key={item.name}
        aria-label={item.name}
        $active={item.active}
        $running={item.running}
      >
        {item.icon}
      </TaskButton>
    ))}
    <Tray>
      <PlainButton $width={48} aria-label="People">
        <Stroke size={16}>
          <circle cx="5" cy="8" r="2.300" />
          <circle cx="11.500" cy="3.500" r="2.500" />
          <path d="M.8 15c0-6 8-6 8 0M9 7.500c3-2.500 6 0 6 3" />
        </Stroke>
      </PlainButton>
      {trayItems.map((item) => (
        <PlainButton $width={24} key={item.name} aria-label={item.name}>
          <Stroke size={16}>{item.icon}</Stroke>
        </PlainButton>
      ))}
      <Clock>
        12:28 PM
        <br />
        2/2/2021
      </Clock>
      <NoticeButton aria-label="Notifications">
        <svg width="16" height="15" viewBox="0 0 16 15">
          <path d="M0 0h16v12H6l-3 3v-3H0z" />
          <path d="M2.500 3.500h11M2.500 6h11M2.500 8.500h7" stroke="#d3e3ea" />
        </svg>
        <NoticeCount>36</NoticeCount>
      </NoticeButton>
    </Tray>
  </Taskbar>
);

export default function App() {
  const [open, setOpen] = useState(true);
  return (
    <Screen>
      <GlobalStyle />
      <Browser />
      <Administrator />
      <WindowsTaskbar />
      {open && (
        <Dialog role="alertdialog" aria-labelledby="dialog-title">
          <DialogTitle id="dialog-title">madd-talent.com says</DialogTitle>
          <DialogText>
            The selected file cannot be uploaded as it is bigger than the
            maximum upload size.
          </DialogText>
          <OkButton onClick={() => setOpen(false)}>OK</OkButton>
        </Dialog>
      )}
    </Screen>
  );
}
